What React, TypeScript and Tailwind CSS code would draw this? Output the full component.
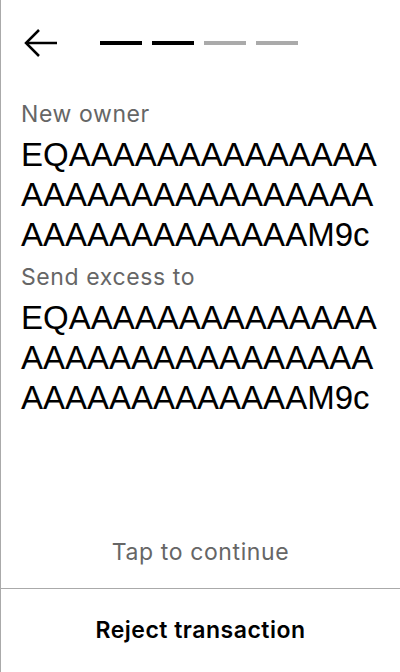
import React from "react";

const ADDR = "EQAAAAAAAAAAAAAAAAAAAAAAAAAAAAAAAAAAAAAAAAAAAM9c";

function Field({ label, value }: { label: string; value: string }) {
  return (
    <div className="flex flex-col">
      <div
        className="text-[23px] leading-[28px] tracking-[0.6px] text-[#666666] mb-[7px]"
        style={{ fontFamily: "Inter, sans-serif" }}
      >
        {label}
      </div>
      <div
        className="text-[33px] leading-[40px] text-black break-all"
        style={{ fontFamily: '"Liberation Sans", Arial, sans-serif' }}
      >
        {value}
      </div>
    </div>
  );
}

export default function App() {
  return (
    <div
      className="w-[400px] h-[672px] bg-white border-l border-[#aaaaaa] flex flex-col"
      style={{ fontFamily: "Inter, sans-serif" }}
    >
      <div className="h-[86px] flex items-center pl-[23px]">
        <svg width="34" height="30" viewBox="0 0 34 30" fill="none" stroke="black" strokeWidth="2.5">
          <path d="M33 15H3" />
          <path d="M15 2L2 15L15 28" />
        </svg>
        <div className="flex gap-[10px] ml-[42px] -mt-[1px]">
          <div className="w-[42px] h-[4px] bg-black" />
          <div className="w-[42px] h-[4px] bg-black" />
          <div className="w-[42px] h-[4px] bg-[#aaaaaa]" />
          <div className="w-[42px] h-[4px] bg-[#aaaaaa]" />
        </div>
      </div>
      <div className="flex flex-col gap-[8px] px-[20px] pt-[14px]">
        <Field label="New owner" value={ADDR} />
        <Field label="Send excess to" value={ADDR} />
      </div>
      <div className="flex-1" />
      <div className="h-[60px] flex items-center justify-center text-[23px] tracking-[0.6px] text-[#666666] mb-[6px]">
        Tap to continue
      </div>
      <div className="h-[84px] border-t border-[#aaaaaa] flex items-center justify-center text-[23px] tracking-[0.5px] font-semibold text-black">
        Reject transaction
      </div>
    </div>
  );
}
